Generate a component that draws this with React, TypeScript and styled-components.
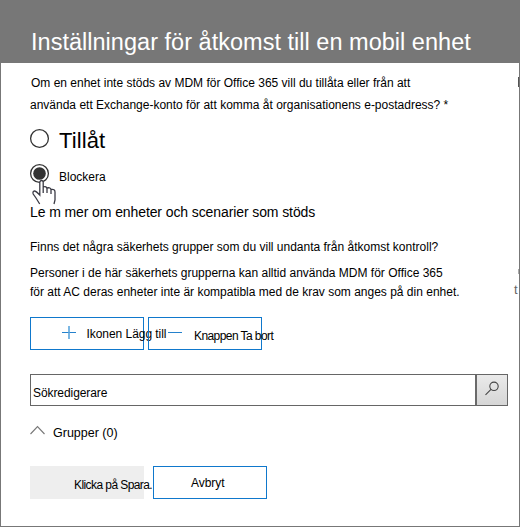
import React from "react";
import styled, { createGlobalStyle } from "styled-components";

const GlobalStyle = createGlobalStyle`
  * { box-sizing: border-box; }
  body {
    margin: 0;
    background: #fff;
    color: #000;
    font-family: "Liberation Sans", Arial, sans-serif;
  }
`;

const Dialog = styled.main`
  position: relative;
  width: 520px;
  height: 527px;
  overflow: hidden;
  display: flex;
  flex-direction: column;
  background: #fff;
  border: 1px solid #777;
`;

const Header = styled.header`
  flex: none;
  height: 62px;
  padding: 27px 0 0 30px;
  background: #777;
`;

const Title = styled.h1`
  margin: 0;
  color: #fff;
  font-size: 23.5px;
  font-weight: 400;
  line-height: 28px;
  letter-spacing: 0.02px;
  white-space: nowrap;
`;

const Content = styled.section`
  display: flex;
  flex-direction: column;
  align-items: flex-start;
  padding: 12px 0 0 29px;
`;

const Copy = styled.p<{ $top?: number; $indent?: number }>`
  margin: ${(p) => p.$top ?? 0}px 0 0 ${(p) => p.$indent ?? 0}px;
  font-size: 12px;
  line-height: 16px;
  white-space: nowrap;
`;

const LearnMore = styled(Copy)`
  font-size: 14px;
  line-height: 18px;
  letter-spacing: -0.1px;
`;

const Option = styled.label<{ $top: number }>`
  display: flex;
  align-items: flex-start;
  height: 20px;
  margin-top: ${(p) => p.$top}px;
`;

const RadioIcon = styled.svg`
  flex: none;
  width: 20px;
  height: 20px;
  overflow: visible;
`;

const OptionText = styled.span<{ $large?: boolean }>`
  margin: ${(p) => (p.$large ? "-1px 0 0 9px" : "5px 0 0 9px")};
  font-size: ${(p) => (p.$large ? 22 : 12)}px;
  line-height: ${(p) => (p.$large ? 26 : 16)}px;
  letter-spacing: ${(p) => (p.$large ? 0.1 : 0)}px;
`;

const Pointer = styled.svg`
  position: absolute;
  left: 31px;
  top: 179px;
  width: 26px;
  height: 25px;
`;

const ButtonRow = styled.div<{ $top: number; $gap: number }>`
  display: flex;
  gap: ${(p) => p.$gap}px;
  margin-top: ${(p) => p.$top}px;
`;

const Button = styled.button<{ $muted?: boolean; $start: number; $drop: number; $tight?: boolean }>`
  display: flex;
  align-items: flex-start;
  width: 114px;
  height: 33px;
  padding: ${(p) => p.$drop}px 0 0 ${(p) => p.$start}px;
  border: 1px solid ${(p) => (p.$muted ? "#eee" : "#0f78cc")};
  background: ${(p) => (p.$muted ? "#eee" : "transparent")};
  color: #000;
  font: 12px/16px "Liberation Sans", Arial, sans-serif;
  letter-spacing: ${(p) => (p.$tight ? -0.58 : -0.05)}px;
  white-space: nowrap;
  text-align: left;
`;

const ButtonIcon = styled.svg<{ $gap: number; $lift: number }>`
  flex: none;
  width: 14px;
  height: 14px;
  margin: -${(p) => p.$lift}px ${(p) => p.$gap}px 0 0;
`;

const SearchBox = styled.div`
  display: flex;
  width: 478px;
  height: 32px;
  margin-top: 24px;
  border: 1px solid #666;
`;

const SearchField = styled.div`
  flex: 1;
  padding: 10px 0 0 2px;
  font-size: 12px;
  line-height: 16px;
  letter-spacing: -0.08px;
`;

const SearchButton = styled.button`
  width: 32px;
  padding: 0;
  border: 0;
  border-left: 2px solid #6a6a6a;
  background: linear-gradient(#eaeaea, #d6d6d6);
`;

const SearchIcon = styled.svg`
  display: block;
  width: 30px;
  height: 30px;
`;

const GroupHeading = styled.div`
  display: flex;
  align-items: flex-start;
  margin-top: 19px;
`;

const Chevron = styled.svg`
  width: 16px;
  height: 11px;
  margin-right: 7px;
`;

const GroupText = styled.span`
  font-size: 12.5px;
  line-height: 17px;
`;

const EdgeMark = styled.span<{ $top: number; $height: number; $tone: string }>`
  position: absolute;
  right: 0;
  top: ${(p) => p.$top}px;
  width: 1px;
  height: ${(p) => p.$height}px;
  background: ${(p) => p.$tone};
`;

const EdgeLetter = styled.span`
  position: absolute;
  left: 513px;
  top: 281px;
  color: #666;
  font-size: 13px;
  line-height: 16px;
`;

function Radio({ checked = false }: { checked?: boolean }) {
  return (
    <RadioIcon viewBox="0 0 20 20" fill="none">
      <circle cx="9.5" cy="9.5" r="8.9" stroke="#333" strokeWidth="1.3" />
      {checked && <circle cx="9.5" cy="9.5" r="6.3" fill="#333" />}
    </RadioIcon>
  );
}

export default function App() {
  return (
    <>
      <GlobalStyle />
      <Dialog>
        <Header>
          <Title>Inställningar för åtkomst till en mobil enhet</Title>
        </Header>
        <Content>
          <Copy $indent={1}>Om en enhet inte stöds av MDM för Office 365 vill du tillåta eller från att</Copy>
          <Copy $top={6}>använda ett Exchange-konto för att komma åt organisationens e-postadress? *</Copy>
          <Option $top={16}>
            <Radio />
            <OptionText $large>Tillåt</OptionText>
          </Option>
          <Option $top={15}>
            <Radio checked />
            <OptionText>Blockera</OptionText>
          </Option>
          <LearnMore $top={19}>Le m mer om enheter och scenarier som stöds</LearnMore>
          <Copy $top={18}>Finns det några säkerhets grupper som du vill undanta från åtkomst kontroll?</Copy>
          <Copy $top={10}>Personer i de här säkerhets grupperna kan alltid använda MDM för Office 365</Copy>
          <Copy $top={3}>för att AC deras enheter inte är kompatibla med de krav som anges på din enhet.</Copy>
          <ButtonRow $top={17} $gap={4}>
            <Button $start={31} $drop={8}>
              <ButtonIcon viewBox="0 0 14 14" $gap={10.5} $lift={0}>
                <path d="M0 6.5H14" stroke="#2481cc" strokeWidth="1" />
                <path d="M7 0V13" stroke="#5aa5dd" strokeWidth="1.6" />
              </ButtonIcon>
              Ikonen Lägg till
            </Button>
            <Button $start={19} $drop={10} $tight>
              <ButtonIcon viewBox="0 0 14 14" $gap={12} $lift={2}>
                <path d="M0 6.5H14" stroke="#2481cc" strokeWidth="1" />
              </ButtonIcon>
              Knappen Ta bort
            </Button>
          </ButtonRow>
          <SearchBox>
            <SearchField>Sökredigerare</SearchField>
            <SearchButton aria-label="Sök">
              <SearchIcon viewBox="0 0 30 30" fill="none" stroke="#444" strokeWidth="1.1">
                <circle cx="17" cy="11.3" r="4.2" />
                <path d="M14 14.4L8.5 19.9" />
              </SearchIcon>
            </SearchButton>
          </SearchBox>
          <GroupHeading>
            <Chevron viewBox="0 0 16 11">
              <path d="M.5 9L7.5 1.5L14.5 9" fill="none" stroke="#777" strokeWidth="1.1" />
            </Chevron>
            <GroupText>Grupper (0)</GroupText>
          </GroupHeading>
          <ButtonRow $top={24} $gap={9}>
            <Button $muted $start={43} $drop={10} $tight>Klicka på Spara.</Button>
            <Button $start={37} $drop={8}>Avbryt</Button>
          </ButtonRow>
        </Content>
        <Pointer viewBox="0 0 26 25">
          <path
            d="M8 21L4 17L1 13V11L3 10L8 14V2L9.5 0L11.5 2V9L23 12V24L20 25H9Z"
            fill="#fff"
          />
          <path
            d="M7.7 24L4 18L1.2 14Q.5 11.6 2 11Q4 10.8 7.8 15V2Q8.2.5 9.5.5Q11 .5 11.2 2V13M11.2 7Q14.7 5.8 15 9V13M15 8Q18.8 7 19 10V14M19 9.5Q23 8.8 23 12V20L22 24"
            fill="none"
            stroke="#3a3a44"
            strokeWidth="1.3"
          />
        </Pointer>
        <EdgeMark $top={76} $height={10} $tone="#555" />
        <EdgeMark $top={268} $height={5} $tone="#aaa" />
        <EdgeLetter>t</EdgeLetter>
      </Dialog>
    </>
  );
}
